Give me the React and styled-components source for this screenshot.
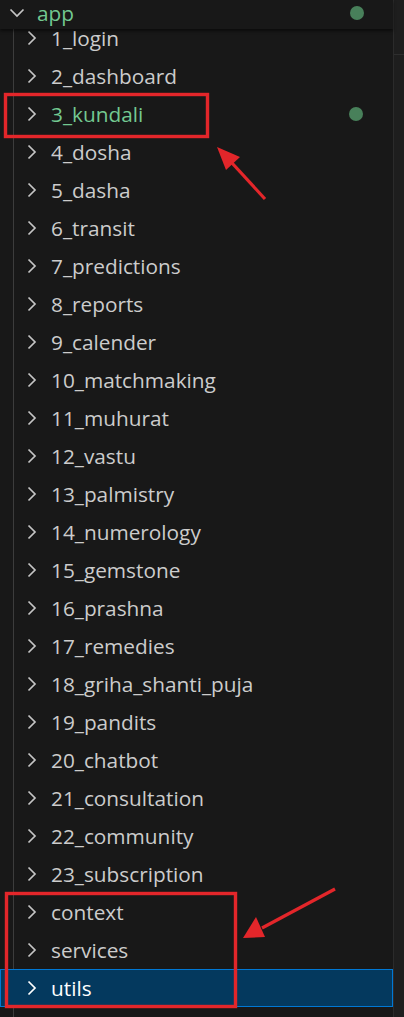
import React from "react";
import styled, { createGlobalStyle } from "styled-components";

const GlobalStyle = createGlobalStyle`
  html, body {
    margin: 0;
    padding: 0;
    background: #181818;
    overflow: hidden;
  }
`;

const folders = [
  "1_login",
  "2_dashboard",
  "3_kundali",
  "4_dosha",
  "5_dasha",
  "6_transit",
  "7_predictions",
  "8_reports",
  "9_calender",
  "10_matchmaking",
  "11_muhurat",
  "12_vastu",
  "13_palmistry",
  "14_numerology",
  "15_gemstone",
  "16_prashna",
  "17_remedies",
  "18_griha_shanti_puja",
  "19_pandits",
  "20_chatbot",
  "21_consultation",
  "22_community",
  "23_subscription",
  "context",
  "services",
  "utils",
];

const modified = ["3_kundali"];

const ChevronRight = () => (
  <svg width="12" height="16" viewBox="0 0 12 16">
    <path d="M2.5 1.5 L9 8 L2.5 14.5" fill="none" stroke="currentColor" strokeWidth="1.7" />
  </svg>
);

const ChevronDown = () => (
  <svg width="16" height="10" viewBox="0 0 16 10">
    <path d="M1.5 1.5 L8 8 L14.5 1.5" fill="none" stroke="currentColor" strokeWidth="1.7" />
  </svg>
);

const Explorer = () => {
  return (
    <>
      <GlobalStyle />
      <Page>
        <Tree>
          <Header>
            <HeaderChevron>
              <ChevronDown />
            </HeaderChevron>
            <Label $green>app</Label>
            <Dot />
          </Header>
          <List>
            {folders.map((name) => (
              <Row key={name} $selected={name === "utils"}>
                <Chevron $selected={name === "utils"}>
                  <ChevronRight />
                </Chevron>
                <Label $green={modified.includes(name)} $selected={name === "utils"}>
                  {name}
                </Label>
                {modified.includes(name) && <Dot />}
              </Row>
            ))}
            <Row>
              <WarnMark />
            </Row>
          </List>
        </Tree>
        <Scrollbar>
          <ScrollThumb />
        </Scrollbar>
        <Annotations width="404" height="1017" viewBox="0 0 404 1017">
          <rect x="5.5" y="94.5" width="202" height="42" fill="none" stroke="#e3262a" strokeWidth="3.4" />
          <rect x="6.5" y="893.5" width="229" height="113" fill="none" stroke="#e3262a" strokeWidth="3.4" />
          <line x1="265" y1="199" x2="232" y2="163" stroke="#e3262a" strokeWidth="3.2" />
          <polygon points="217,147 240,157 226,170" fill="#e3262a" />
          <line x1="335" y1="889" x2="262" y2="928" stroke="#e3262a" strokeWidth="3.2" />
          <polygon points="243,938 256,917 265,937" fill="#e3262a" />
        </Annotations>
      </Page>
    </>
  );
};

const Page = styled.div`
  position: relative;
  width: 404px;
  height: 1017px;
  display: flex;
  background: #181818;
  overflow: hidden;
  font-family: "Open Sans", "Noto Sans", sans-serif;
`;

const Tree = styled.div`
  flex: 1;
  display: flex;
  flex-direction: column;
  min-width: 0;
`;

const Header = styled.div`
  position: relative;
  z-index: 2;
  height: 29px;
  display: flex;
  align-items: center;
  padding-left: 9px;
  padding-bottom: 4px;
  box-sizing: border-box;
  background: #181818;
  box-shadow: 0 2px 3px rgba(0, 0, 0, 0.55);
`;

const HeaderChevron = styled.span`
  display: flex;
  color: #c5c5c5;
  width: 28px;
`;

const List = styled.div`
  position: relative;
  margin-top: -10px;
  margin-left: 13px;
  border-left: 1px solid #3c3c3c;
`;

const Row = styled.div`
  height: 38px;
  display: flex;
  align-items: center;
  margin-left: -14px;
  padding-left: 25px;
  box-sizing: border-box;
  background: ${(p) => (p.$selected ? "#04395e" : "transparent")};
  border: 1px solid ${(p) => (p.$selected ? "#0078d4" : "transparent")};
`;

const Chevron = styled.span`
  display: flex;
  width: 25px;
  color: ${(p) => (p.$selected ? "#ffffff" : "#c5c5c5")};
`;

const Label = styled.span`
  flex: 1;
  font-size: 20.8px;
  color: ${(p) => (p.$selected ? "#ffffff" : p.$green ? "#73c991" : "#cccccc")};
  white-space: nowrap;
`;

const Dot = styled.span`
  flex: 0 0 14px;
  width: 14px;
  height: 14px;
  border-radius: 50%;
  background: #48805a;
  margin-right: 29px;
`;

const WarnMark = styled.span`
  width: 0;
  height: 0;
  margin-top: 6px;
  margin-left: 3px;
  border-left: 4px solid transparent;
  border-right: 4px solid transparent;
  border-bottom: 14px solid #d7b82e;
`;

const Scrollbar = styled.div`
  width: 10px;
  background: #1e1e1e;
  border-left: 1px solid #2b2b2b;
`;

const ScrollThumb = styled.div`
  height: 54px;
  border-bottom: 1px solid #2e2e2e;
`;

const Annotations = styled.svg`
  position: absolute;
  left: 0;
  top: 0;
  pointer-events: none;
  z-index: 5;
`;

export default Explorer;
